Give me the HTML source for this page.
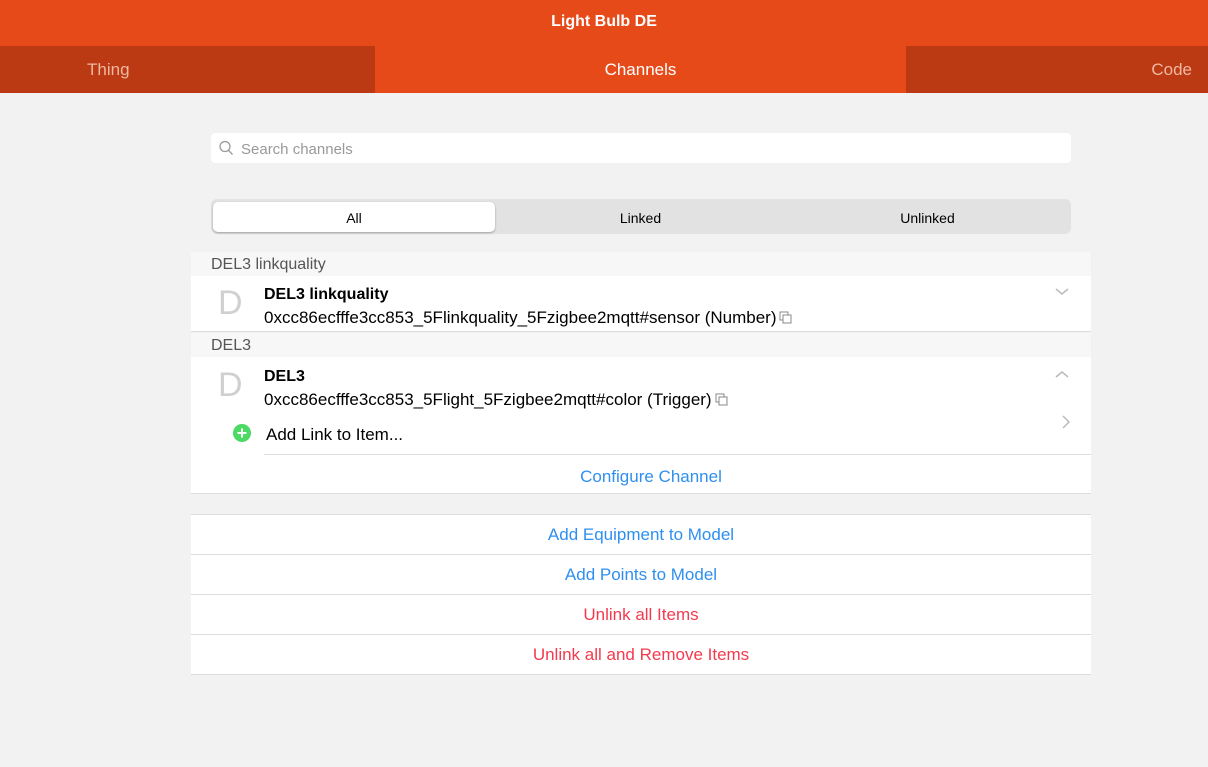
<!DOCTYPE html>
<html><head><meta charset="utf-8"><style>
*{box-sizing:border-box;margin:0;padding:0}
body{width:1208px;height:767px;background:#f2f2f2;font-family:"Liberation Sans",sans-serif;position:relative;overflow:hidden;color:#000}
.a{position:absolute}
.hdr{left:0;top:0;width:1208px;height:46px;background:#e64a19;color:#fff;font-weight:bold;font-size:16px;text-align:center;line-height:44px}
.tab{top:46px;height:47px;line-height:47px;font-size:17px;color:#f0b8a0}
.t{font-size:16px}
.s{font-size:17px;white-space:nowrap}
.s svg{vertical-align:-2px;margin-left:3px}
.blue{color:#2f8ff0}
.red{color:#f43a4e}
.row{left:191px;width:900px;height:40px;background:#fff;border-bottom:1px solid #ddd;text-align:center;line-height:40px;font-size:17px}
.D{font-size:34px;color:#d0d0d0;left:218px}
</style></head><body>
<div class="a hdr">Light Bulb DE</div>
<div class="a tab" style="left:0;width:375px;background:#bb3a14;padding-left:87px">Thing</div>
<div class="a tab" style="left:375px;width:531px;background:#e64a19;color:#fff;text-align:center">Channels</div>
<div class="a tab" style="left:906px;width:302px;background:#bb3a14;text-align:right;padding-right:16px">Code</div>

<div class="a" style="left:211px;top:133px;width:860px;height:30px;background:#fff;border-radius:4px"></div>
<svg class="a" style="left:218px;top:140px" width="16" height="16" viewBox="0 0 16 16"><circle cx="7" cy="6.5" r="5" fill="none" stroke="#999" stroke-width="1.3"/><path d="M10.5 10.3l4 4.2" stroke="#999" stroke-width="1.3"/></svg>
<div class="a" style="left:241px;top:141px;font-size:15px;color:#999">Search channels</div>

<div class="a" style="left:211px;top:199px;width:860px;height:35px;background:#e2e2e2;border-radius:6px"></div>
<div class="a" style="left:213px;top:202px;width:282px;height:30px;background:#fff;border-radius:5px;box-shadow:0 1px 2px rgba(0,0,0,.3)"></div>
<div class="a" style="left:213px;top:210px;width:282px;text-align:center;font-size:14px">All</div>
<div class="a" style="left:497px;top:210px;width:287px;text-align:center;font-size:14px">Linked</div>
<div class="a" style="left:784px;top:210px;width:287px;text-align:center;font-size:14px">Unlinked</div>

<div class="a" style="left:191px;top:252px;width:900px;height:24px;background:#f7f7f7"></div>
<div class="a" style="left:211px;top:256px;font-size:16px;color:#555">DEL3 linkquality</div>
<div class="a" style="left:191px;top:276px;width:900px;height:56px;background:#fff;border-bottom:1px solid #ddd"></div>
<div class="a D" style="top:284px">D</div>
<div class="a t" style="left:264px;top:286px;font-weight:bold">DEL3 linkquality</div>
<div class="a s" style="left:264px;top:308px">0xcc86ecfffe3cc853_5Flinkquality_5Fzigbee2mqtt#sensor (Number)<svg width="14" height="14"><rect x="1" y="1" width="8" height="8" fill="none" stroke="#888"/><rect x="4" y="4" width="8" height="8" fill="#fff" stroke="#888"/></svg></div>
<svg class="a" style="left:1055px;top:287px" width="14" height="10"><path d="M1 2l6 5 6-5" fill="none" stroke="#bbb" stroke-width="1.5"/></svg>

<div class="a" style="left:191px;top:333px;width:900px;height:24px;background:#f7f7f7"></div>
<div class="a" style="left:211px;top:337px;font-size:16px;color:#555">DEL3</div>
<div class="a" style="left:191px;top:357px;width:900px;height:137px;background:#fff;border-bottom:1px solid #ddd"></div>
<div class="a D" style="top:366px">D</div>
<div class="a t" style="left:264px;top:368px;font-weight:bold">DEL3</div>
<div class="a s" style="left:264px;top:390px">0xcc86ecfffe3cc853_5Flight_5Fzigbee2mqtt#color (Trigger)<svg width="14" height="14"><rect x="1" y="1" width="8" height="8" fill="none" stroke="#888"/><rect x="4" y="4" width="8" height="8" fill="#fff" stroke="#888"/></svg></div>
<svg class="a" style="left:1055px;top:369px" width="14" height="10"><path d="M1 8l6-5 6 5" fill="none" stroke="#bbb" stroke-width="1.5"/></svg>
<svg class="a" style="left:232px;top:423px" width="20" height="20"><circle cx="10" cy="10" r="9" fill="#4cd964"/><path d="M10 5.5v9M5.5 10h9" stroke="#fff" stroke-width="2"/></svg>
<div class="a s" style="left:266px;top:425px">Add Link to Item...</div>
<svg class="a" style="left:1061px;top:414px" width="10" height="16"><path d="M2 2l6 6-6 6" fill="none" stroke="#bbb" stroke-width="1.5"/></svg>
<div class="a" style="left:264px;top:454px;width:827px;height:1px;background:#ddd"></div>
<div class="a blue" style="left:191px;top:467px;width:920px;text-align:center;font-size:17px">Configure Channel</div>

<div class="a" style="left:191px;top:514px;width:900px;height:1px;background:#ddd"></div>
<div class="a row blue" style="top:515px">Add Equipment to Model</div>
<div class="a row blue" style="top:555px">Add Points to Model</div>
<div class="a row red" style="top:595px">Unlink all Items</div>
<div class="a row red" style="top:635px">Unlink all and Remove Items</div>
</body></html>
